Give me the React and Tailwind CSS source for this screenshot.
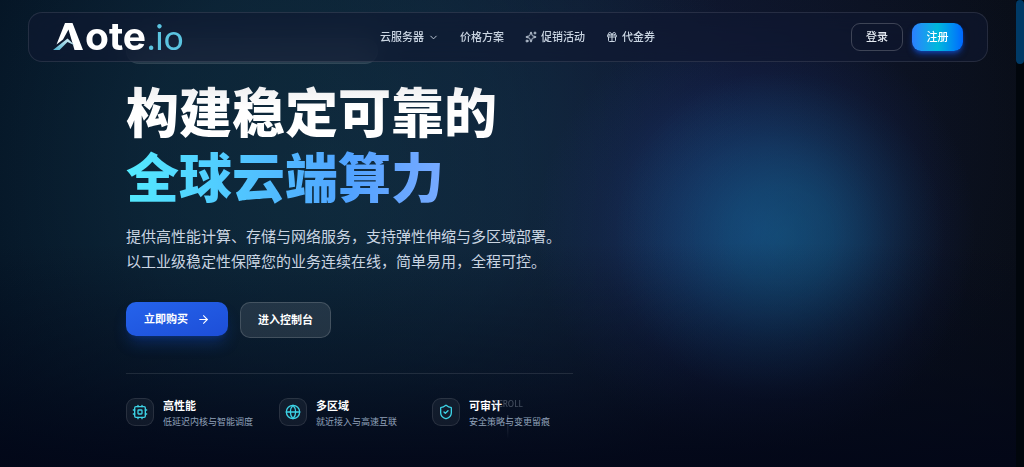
import { ArrowRight, ChevronDown, Gift, Globe, ShieldCheck, Sparkles } from 'lucide-react';

const features = [
  { icon: Chip, title: '高性能', desc: '低延迟内核与智能调度' },
  { icon: Globe, title: '多区域', desc: '就近接入与高速互联' },
  { icon: ShieldCheck, title: '可审计', desc: '安全策略与变更留痕' },
];

export default function App() {
  return (
    <div className="flex min-h-screen bg-[#020617] font-['Inter','Noto_Sans_CJK_SC',sans-serif] text-white">
      <div className="relative flex-1 min-w-0 px-7 pt-3 pb-8 bg-[linear-gradient(to_bottom,transparent_52%,#02061773_80%,#020617d9_98%),radial-gradient(circle_165px_at_780px_236px,#0f6a8c73_0%,#0f6a8c5c_30%,#0f6a8c24_65%,transparent_100%),radial-gradient(circle_220px_at_756px_232px,#1e45909c_0%,#1e459066_38%,#1e3a8a24_72%,transparent_100%),radial-gradient(ellipse_420px_440px_at_330px_170px,#15405480_0%,#12384d73_45%,transparent_100%),radial-gradient(ellipse_380px_360px_at_670px_130px,#1a1f5259_0%,transparent_100%),linear-gradient(to_right,#041222,#0c1728_55%,#090e18)]">
        <Header />
        <main className="max-w-[960px] mx-auto px-6 lg:px-[98px]">
          {/* announcement pill, slides under the header */}
          <div className="-mt-6 w-[252px] max-w-full h-[26px] rounded-full bg-white/10 border border-white/5" />

          <h1 className="mt-[18px] max-w-[447px] text-[53px] leading-[65px] font-black">
            <span className="block bg-linear-to-b from-[#ececee] to-white to-40% bg-clip-text text-transparent">构建稳定可靠的</span>
            <span className="block bg-linear-to-r from-cyan-300 via-blue-400 to-indigo-300 bg-clip-text text-transparent">全球云端算力</span>
          </h1>

          <p className="mt-3 text-[15px] leading-[25px] text-slate-300">
            提供高性能计算、存储与网络服务，支持弹性伸缩与多区域部署。
            <br />
            以工业级稳定性保障您的业务连续在线，简单易用，全程可控。
          </p>

          <div className="mt-7 flex items-start gap-3">
            <button className="h-[34px] px-[18px] flex items-center gap-[9px] rounded-[10px] bg-linear-to-br from-[#2563eb] to-[#1d4ed8] text-[11px] font-bold shadow-lg shadow-blue-600/25">
              立即购买
              <ArrowRight size={13} />
            </button>
            <button className="h-9 px-[17px] rounded-[10px] bg-white/10 border border-white/15 text-[11px] font-bold">
              进入控制台
            </button>
          </div>

          <div className="mt-[35px] pt-6 max-w-[447px] border-t border-white/10 grid grid-cols-3 gap-3">
            {features.map((item) => (
              <Feature key={item.title} {...item} />
            ))}
          </div>
        </main>

        {/* scroll hint */}
        <div className="absolute bottom-7 left-1/2 -translate-x-1/2 flex flex-col items-center gap-[3px] opacity-30">
          <span className="font-['Noto_Sans'] text-[8px] leading-[16px] font-medium text-slate-300">SCROLL</span>
          <span className="w-px h-6 bg-linear-to-b from-slate-300 to-transparent" />
        </div>
      </div>

      {/* scrollbar */}
      <div className="w-2 shrink-0 bg-[#01060c]">
        <div className="h-16 rounded-full bg-[#003a66]" />
      </div>
    </div>
  );
}

function Header() {
  return (
    <header className="sticky top-3 z-10 w-full max-w-[960px] mx-auto h-[50px] px-6 flex items-center justify-between rounded-[14px] border border-white/10 bg-[#0f1830]/60 backdrop-blur-lg">
      <a href="#" aria-label="Aote.io" className="shrink-0">
        <Logo />
      </a>
      <nav className="flex items-center gap-[21px] text-[11px] font-medium text-slate-300">
        <a href="#" className="flex items-center gap-1">
          云服务器
          <ChevronDown size={11} />
        </a>
        <a href="#">价格方案</a>
        <a href="#" className="flex items-center gap-1">
          <Sparkles size={12} />
          促销活动
        </a>
        <a href="#" className="flex items-center gap-1">
          <Gift size={12} />
          代金券
        </a>
      </nav>
      <div className="flex items-center gap-[9px]">
        <button className="w-[52px] h-7 rounded-[9px] border border-white/20 text-[11px] font-medium text-slate-200">登录</button>
        <button className="w-[51px] h-7 rounded-[9px] bg-linear-to-r from-[#2b7fff] via-[#00b8db] to-[#0066ff] text-[11px] font-medium shadow-md shadow-blue-600/50">注册</button>
      </div>
    </header>
  );
}

function Logo() {
  return (
    <svg width="131" height="48" viewBox="0 -7 131 48" role="img">
      <defs>
        <linearGradient id="swoosh" x1="0" y1="1" x2="1" y2="0">
          <stop offset="0" stopColor="#4fb3d0" />
          <stop offset="1" stopColor="#e2f4fa" />
        </linearGradient>
      </defs>
      <path d="M12 3h7.500l10.500 27h-8.500L15.500 9.500 10 19.500 3.500 24.500Z" fill="#fff" />
      <path d="M0 30 14.500 18.500 22 25.500 14.500 22 6.500 30Z" fill="url(#swoosh)" />
      <text x="32" y="30" fontFamily="Inter" fontWeight="700" fontSize="39" fill="#fff">ote</text>
      <text x="94" y="30" fontFamily="Lato" fontWeight="400" fontSize="35" fill="#5bc4e0">.io</text>
    </svg>
  );
}

function Chip({ size }) {
  return (
    <svg width={size} height={size} viewBox="0 0 24 24" fill="none" stroke="currentColor" strokeWidth="2" strokeLinecap="round" strokeLinejoin="round">
      <rect x="4" y="4" width="16" height="16" rx="2" />
      <rect x="9" y="9" width="6" height="6" rx="1" />
      <path d="M9 2v2M15 2v2M9 20v2M15 20v2M2 9h2M2 15h2M20 9h2M20 15h2" />
    </svg>
  );
}

function Feature({ icon: Icon, title, desc }) {
  return (
    <div className="flex items-start gap-[9px]">
      <div className="size-7 shrink-0 flex items-center justify-center rounded-[9px] bg-white/5 border border-white/10 text-[#3dd3e6]">
        <Icon size={16} />
      </div>
      <div className="whitespace-nowrap">
        <div className="text-[11px] leading-4 font-bold">{title}</div>
        <div className="text-[9px] leading-4 text-slate-400">{desc}</div>
      </div>
    </div>
  );
}
